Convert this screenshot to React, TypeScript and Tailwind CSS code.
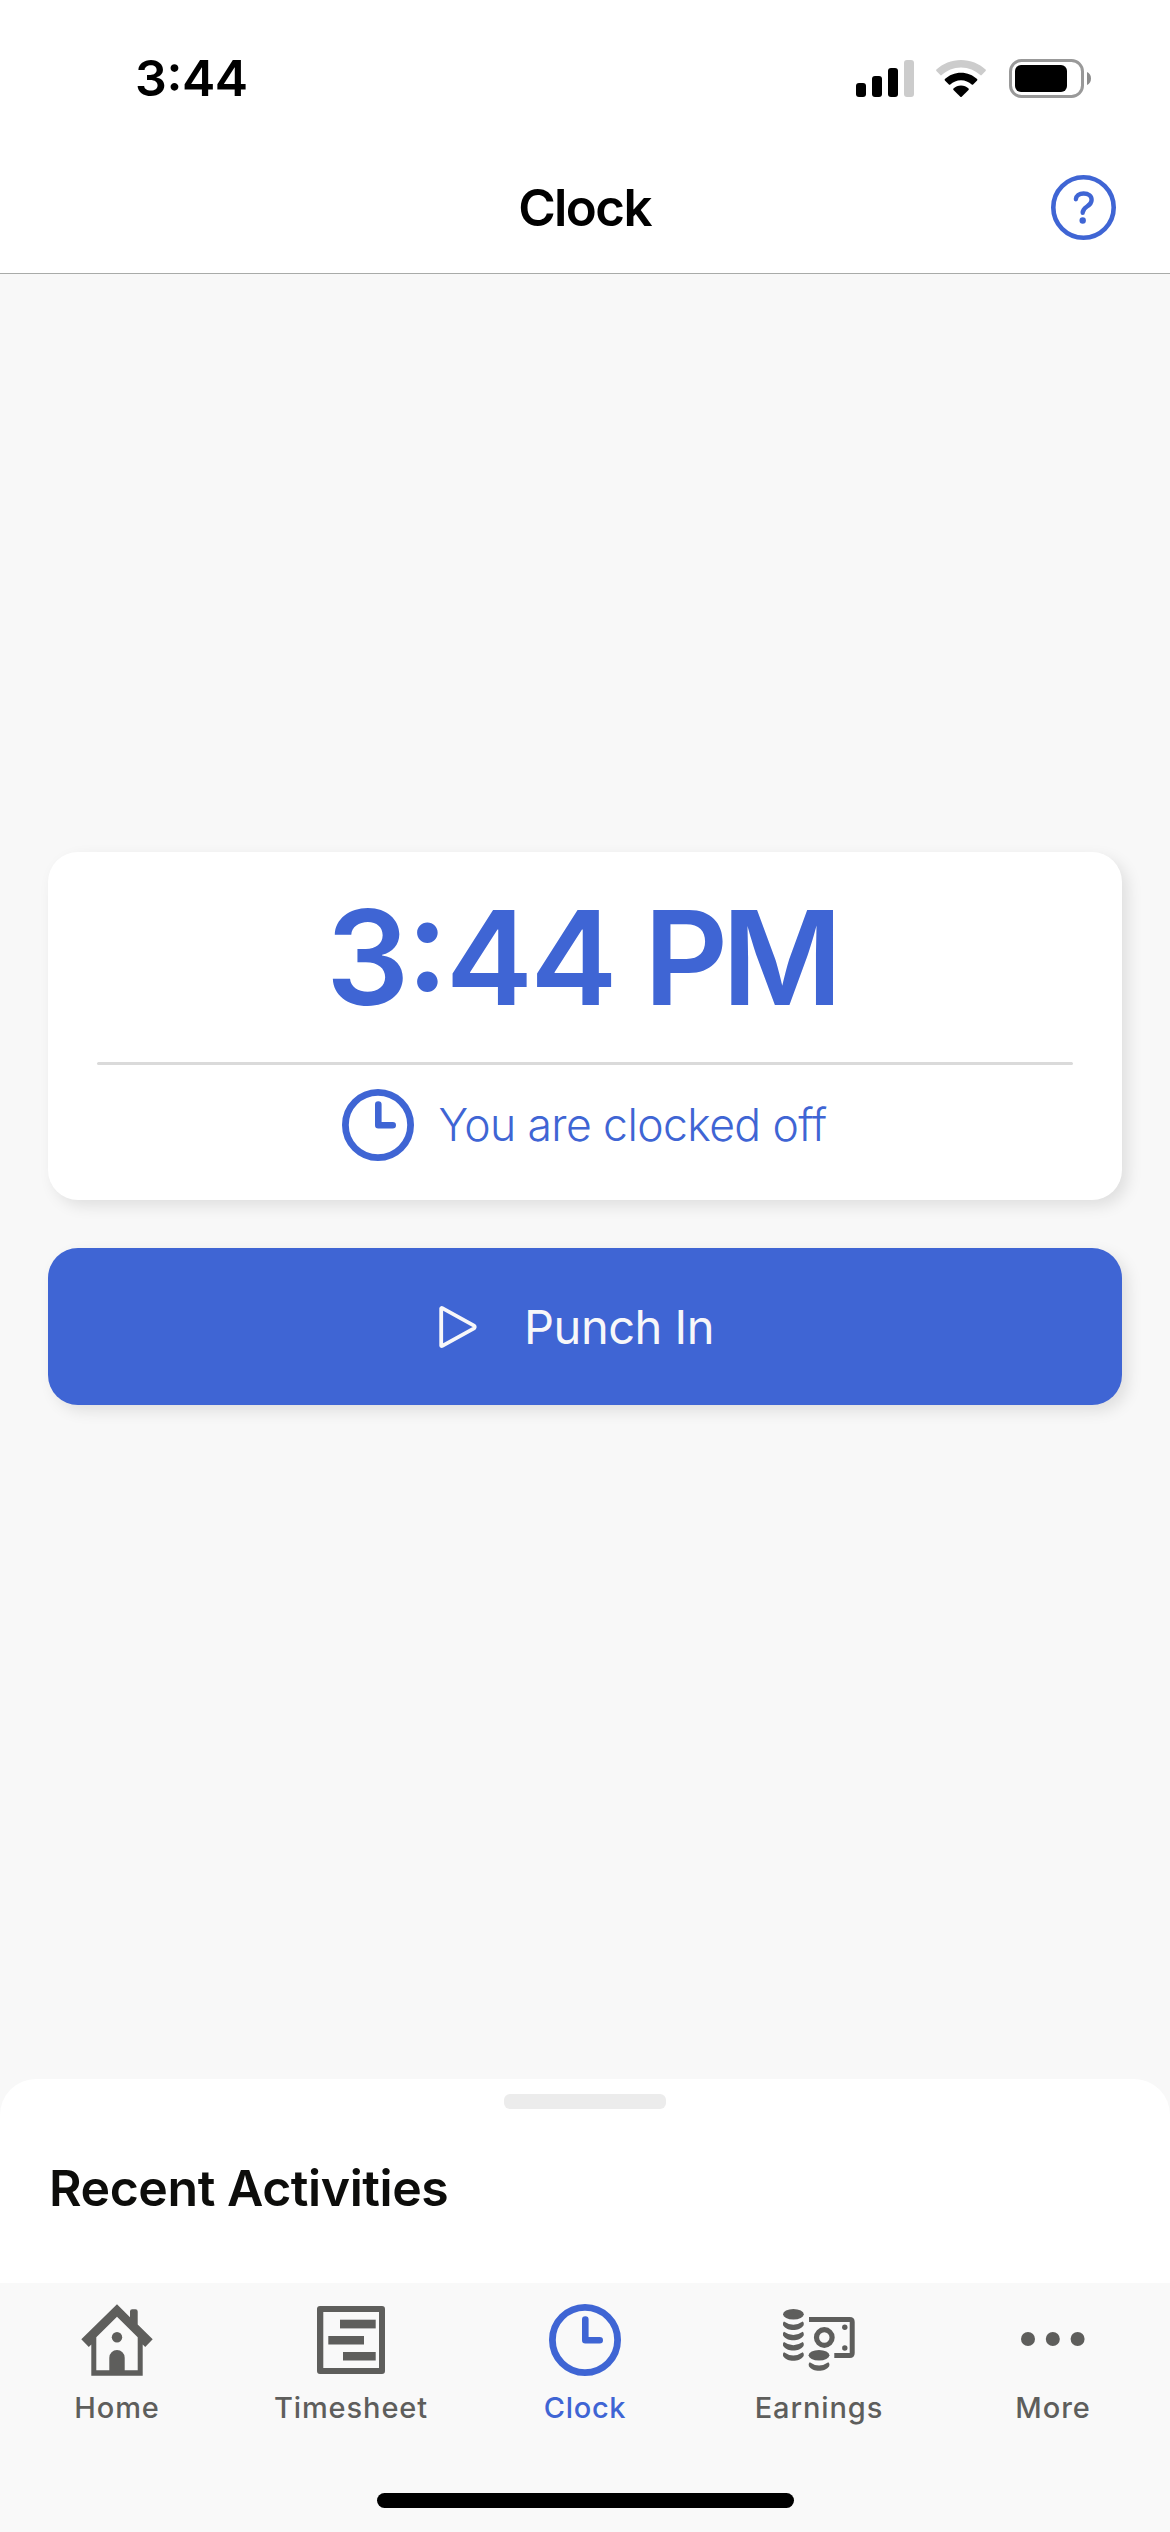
import type { ReactNode } from "react";

function SignalIcon() {
  return (
    <svg className="h-[37px] w-[58px]" viewBox="0 0 58 37">
      <rect x="0" y="23" width="10" height="14" rx="3" />
      <rect x="16" y="16" width="10" height="21" rx="3" />
      <rect x="32" y="8" width="10" height="29" rx="3" />
      <rect x="48" y="0" width="10" height="37" rx="3" fill="#cccccc" />
    </svg>
  );
}

function WifiIcon() {
  return (
    <svg className="h-[37px] w-[50px]" viewBox="0 0 50 37">
      <path
        d="M25 0C15.5 0 6.8 3.6 .4 9.6Q-.2 10.3 .4 11L4.3 15.1Q5 15.7 5.7 15.1C10.8 10.400 17.500 7.400 25 7.400S39.200 10.400 44.300 15.100Q45 15.700 45.700 15.100L49.600 11Q50.200 10.300 49.600 9.600C43.200 3.600 34.500 0 25 0Z"
        fill="#cccccc"
      />
      <path d="M25 12.800C18.800 12.800 13.100 15.200 8.900 19.100Q8.300 19.800 8.900 20.500L12.900 24.500Q13.600 25.100 14.300 24.500C17.100 21.900 20.800 20.300 25 20.300S32.900 21.900 35.700 24.500Q36.400 25.100 37.100 24.500L41.100 20.500Q41.700 19.800 41.100 19.100C36.900 15.200 31.200 12.800 25 12.800Z" />
      <path d="M25 25.600C22.100 25.600 19.500 26.700 17.500 28.500Q16.900 29.200 17.500 29.900L24.300 36.700Q25 37.300 25.700 36.700L32.500 29.900Q33.100 29.200 32.500 28.500C30.500 26.700 27.900 25.600 25 25.600Z" />
    </svg>
  );
}

function BatteryIcon() {
  return (
    <svg className="h-[39px] w-[82px]" viewBox="0 0 82 39">
      <rect x="1.500" y="1.500" width="72" height="36" rx="11" fill="none" stroke="#999999" strokeWidth="3" />
      <rect x="6" y="6" width="52" height="27" rx="6" />
      <path d="M78 13C80.500 14 82 16.500 82 19.500S80.500 25 78 26Z" fill="#8c8c8c" />
    </svg>
  );
}

function HelpIcon() {
  return (
    <svg className="size-[65px]" viewBox="0 0 65 65" fill="none" stroke="#3f65d4">
      <circle cx="32.500" cy="32.500" r="30.200" strokeWidth="4.600" />
      <path
        d="M24.900 24.200C25.100 20.800 28.200 18.500 32.600 18.500C37.500 18.500 40.600 21 40.600 24.900C40.600 28.200 38.800 29.700 36 31.500C33.100 33.400 31.700 34.700 31.700 37.700"
        strokeWidth="4.400"
        strokeLinecap="round"
        strokeLinejoin="round"
      />
      <circle cx="31.700" cy="45.500" r="3.200" fill="#3f65d4" stroke="none" />
    </svg>
  );
}

function ClockIcon() {
  return (
    <svg className="size-[72px]" viewBox="0 0 72 72" fill="none" stroke="#3f65d4">
      <circle cx="36" cy="36" r="32.600" strokeWidth="6.800" />
      <path d="M36.300 15.600V36.200H50.700" strokeWidth="6.600" strokeLinecap="round" strokeLinejoin="round" />
    </svg>
  );
}

function PlayIcon() {
  return (
    <svg className="h-[42px] w-[38px]" viewBox="0 0 38 42">
      <path
        d="M2.200 2.500V39.500Q2.400 40.400 3.300 39.900L35 22.300Q36.300 21 35 19.700L3.300 2.100Q2.400 1.600 2.200 2.500Z"
        fill="none"
        stroke="#f7f7f9"
        strokeWidth="3.800"
        strokeLinejoin="round"
      />
    </svg>
  );
}

function HomeIcon() {
  return (
    <svg className="size-[72px]" viewBox="0 0 72 72" fill="#5e5e5c">
      <path
        fillRule="evenodd"
        d="M36 .3L49 13.200V7.500Q49 5.300 51.200 5.300H54.500Q56.700 5.300 56.700 7.500V20.500L71.700 35.300L64.200 43L61.700 40.500V71.700H10.300V40.500L7.800 43L.3 35.300ZM36 12.700L15.300 33.300V66.300H28.300V53.700A7.700 7.700 0 0 1 43.700 53.700V66.300H56.700V33.300Z"
      />
      <circle cx="36" cy="33.300" r="5.200" />
    </svg>
  );
}

function TimesheetIcon() {
  return (
    <svg className="size-[72px]" viewBox="0 0 72 72" fill="#5e5e5c">
      <path
        fillRule="evenodd"
        d="M5 2H67Q70 2 70 5V67Q70 70 67 70H5Q2 70 2 67V5Q2 2 5 2ZM8.300 8V64H64V8Z"
      />
      <rect x="25" y="15.700" width="35.700" height="8.700" />
      <rect x="13.300" y="32" width="35.700" height="8.500" />
      <rect x="28" y="48" width="32.700" height="8.500" />
    </svg>
  );
}

const coinEdge =
  "M1 17.500Q10.300 24 19.700 17.500Q21.400 19 20.500 21.400C18.500 24.600 14.300 26 10.300 26S2.100 24.600 .2 21.400Q-.7 19 1 17.500Z";

function EarningsIcon() {
  return (
    <svg className="size-[72px]" viewBox="0 0 72 72" fill="#5e5e5c">
      <ellipse cx="10.400" cy="10.200" rx="10.400" ry="5.200" />
      {[0, 10.300, 20.500, 30.800].map((y) => (
        <path key={y} d={coinEdge} transform={`translate(0 ${y})`} />
      ))}
      <ellipse cx="36" cy="51.300" rx="10.400" ry="5.200" />
      <path d={coinEdge} transform="translate(25.700 40.800)" />
      <path d="M26 15.500H66.700Q69.200 15.500 69.200 18V49Q69.200 51.500 66.700 51.500H51.300" fill="none" stroke="#5e5e5c" strokeWidth="5" />
      <circle cx="41.300" cy="33.500" r="7.800" fill="none" stroke="#5e5e5c" strokeWidth="5.200" />
      <circle cx="61.800" cy="23.300" r="2.700" />
      <circle cx="61.800" cy="44" r="2.700" />
    </svg>
  );
}

function MoreIcon() {
  return (
    <svg className="size-[72px]" viewBox="0 0 72 72" fill="#5e5e5c">
      <circle cx="11" cy="35" r="7" />
      <circle cx="35.800" cy="35" r="7" />
      <circle cx="60.600" cy="35" r="7" />
    </svg>
  );
}

function Tab({ icon, label, active = false }: { icon: ReactNode; label: string; active?: boolean }) {
  return (
    <button className="flex flex-col items-center pt-[21px]">
      {icon}
      <span
        className={
          active
            ? "mt-[11px] text-[29px] leading-[41px] font-medium tracking-[0.7px] text-[#3f65d4]"
            : "mt-[11px] text-[29px] leading-[41px] font-medium tracking-[0.9px] text-[#5e5e5c]"
        }
      >
        {label}
      </span>
    </button>
  );
}

export default function App() {
  return (
    <div className="flex h-[2532px] w-[1170px] flex-col overflow-hidden bg-[#f8f8f8] font-['Inter',sans-serif]">
      <header className="h-[274px] border-b border-[#a9aba9] bg-white">
        <div className="flex h-[156px] items-center justify-between pr-[79px] pl-[135px]">
          <span className="text-[50px] leading-none font-semibold tracking-[-0.4px] [font-feature-settings:'case']">
            3:44
          </span>
          <div className="flex items-center">
            <SignalIcon />
            <div className="ml-[22px]">
              <WifiIcon />
            </div>
            <div className="ml-[23px]">
              <BatteryIcon />
            </div>
          </div>
        </div>
        <div className="grid h-[103px] grid-cols-3 items-center pr-[54px] pl-[54px]">
          <h1 className="col-start-2 pr-px text-center text-[51px] leading-none font-semibold tracking-[-1.6px]">Clock</h1>
          <button className="justify-self-end">
            <HelpIcon />
          </button>
        </div>
      </header>

      <main className="flex flex-1 flex-col px-12 pt-[578px]">
        <section className="h-[348px] rounded-[30px] bg-white px-[49px] text-[#3f65d4] shadow-[6px_6px_15px_rgba(0,0,0,0.1)]">
          <div className="flex h-[210px] items-center justify-center gap-[29px] pt-px pr-2 text-[131px] leading-none font-semibold [font-feature-settings:'case']">
            <span className="tracking-[-2.7px]">3:44</span>
            <span className="tracking-[-6.5px]">PM</span>
          </div>
          <div className="h-[3px] rounded-full bg-[#dadada]" />
          <div className="flex h-[120px] items-center justify-center gap-[25px] pr-[2px]">
            <ClockIcon />
            <span className="text-[44.5px] leading-none font-light tracking-[-0.6px]">You are clocked off</span>
          </div>
        </section>
        <button className="mt-12 flex h-[157px] items-center justify-center gap-[47px] rounded-[30px] bg-[#3f65d4] pr-[17px] text-[47px] leading-none font-normal tracking-[-0.5px] text-[#f7f7f9] shadow-[6px_6px_15px_rgba(0,0,0,0.1)]">
          <PlayIcon />
          <span>Punch In</span>
        </button>
      </main>

      <section className="h-[204px] rounded-t-[36px] bg-white pt-[15px]">
        <div className="mx-auto h-[15px] w-[162px] rounded-[6px] bg-[#ececec]" />
        <h2 className="mt-[49px] pl-[49px] text-[50px] leading-[60px] font-semibold tracking-[-0.44px] text-[#0d0d0b]">
          Recent Activities
        </h2>
      </section>

      <footer className="flex h-[249px] flex-col bg-[#f9f9f9]">
        <nav className="grid grid-cols-5">
          <Tab icon={<HomeIcon />} label="Home" />
          <Tab icon={<TimesheetIcon />} label="Timesheet" />
          <Tab icon={<ClockIcon />} label="Clock" active />
          <Tab icon={<EarningsIcon />} label="Earnings" />
          <Tab icon={<MoreIcon />} label="More" />
        </nav>
        <div className="mx-auto mt-auto mb-6 h-[15px] w-[417px] rounded-full bg-black" />
      </footer>
    </div>
  );
}
